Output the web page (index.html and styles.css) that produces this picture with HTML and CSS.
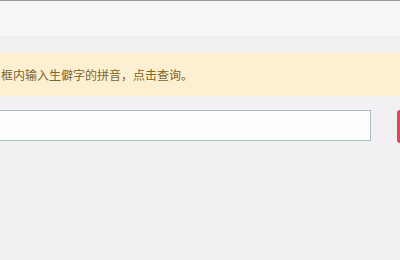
FILE: index.html
```html
<!DOCTYPE html>
<html>
<head>
  <title>生僻字查询</title>
  <link rel="stylesheet" href="styles.css">
</head>
<body>
  <div class="topbar"></div>
  <div class="subbar"></div>

  <div class="alert">框内输入生僻字的拼音，点击查询。</div>

  <div class="search">
    <input type="text" class="search-input">
    <button class="search-button" aria-label="查询"></button>
  </div>
</body>
</html>
```

FILE: styles.css
```css
/* Main Styles */
body {
  font-family: "Noto Sans CJK SC", "Noto Sans", sans-serif;
  margin: 0;
  padding: 0;
  background-color: #f2f0f2;
  overflow: hidden;
}

/* Header Styles */
.topbar {
  height: 35px;
  background-color: #f6f6f6;
  border-top: 1px solid #9a9a9a;
}

.subbar {
  height: 17px;
  background-color: #f0f0f0;
}

/* Alert Styles */
.alert {
  height: 43px;
  line-height: 43px;
  padding-left: 1px;
  background-color: #fdf0d2;
  color: #7f6427;
  font-size: 12px;
  white-space: nowrap;
}

/* Search Styles */
.search {
  display: flex;
  align-items: flex-start;
  margin-top: 14px;
}

.search-input {
  flex: none;
  box-sizing: border-box;
  width: 371px;
  height: 31px;
  margin: 0;
  border: 1px solid #a9bfbf;
  border-left: none;
  background-color: #fcfdfd;
  outline: none;
}

.search-button {
  flex: none;
  width: 3px;
  height: 33px;
  margin-left: 26px;
  padding: 0;
  border: none;
  border-radius: 4px 0 0 4px;
  background-color: #d94a58;
}
```
